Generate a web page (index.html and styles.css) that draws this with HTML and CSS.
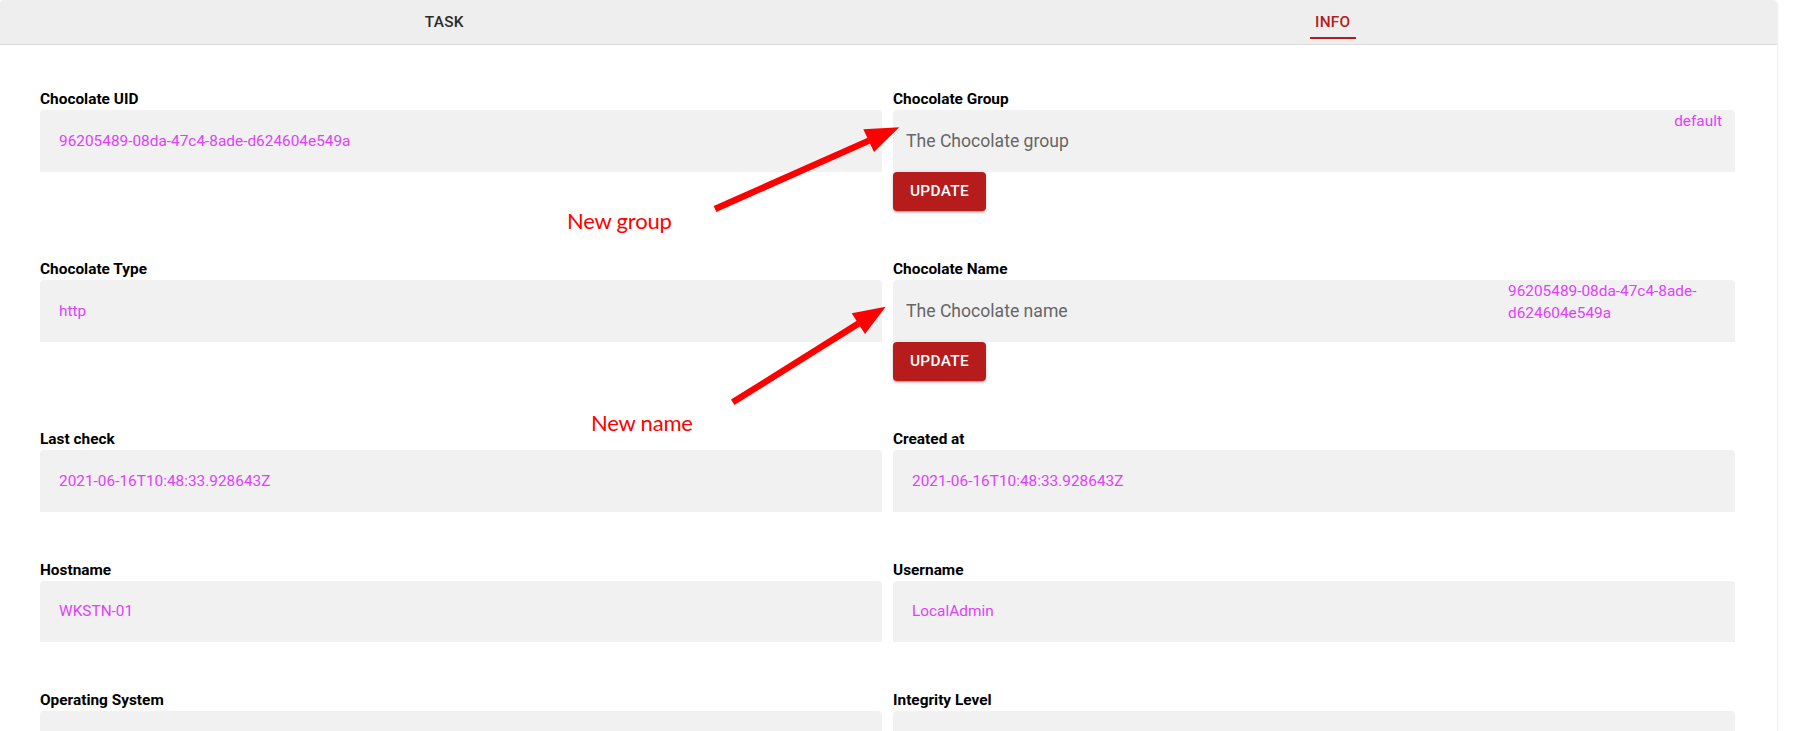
FILE: index.html
```html
<!DOCTYPE html>
<html lang="en">
<head>
<meta charset="utf-8">
<title>Chocolate info</title>
<link rel="stylesheet" href="styles.css">
</head>
<body>
<div class="app">
  <div class="paper">
    <div class="tabs">
      <div class="tab"><span class="tab-label">Task</span></div>
      <div class="tab tab-active"><span class="tab-label">Info</span></div>
    </div>
    <div class="fields">
      <div class="field">
        <div class="field-label">Chocolate UID</div>
        <div class="field-box"><span class="field-value">96205489-08da-47c4-8ade-d624604e549a</span></div>
      </div>
      <div class="field">
        <div class="field-label">Chocolate Group</div>
        <div class="field-box field-input">
          <span class="input-text">The Chocolate group</span>
          <span class="input-adornment">default</span>
        </div>
        <button class="update-btn">Update</button>
      </div>

      <div class="field">
        <div class="field-label">Chocolate Type</div>
        <div class="field-box"><span class="field-value">http</span></div>
      </div>
      <div class="field">
        <div class="field-label">Chocolate Name</div>
        <div class="field-box field-input">
          <span class="input-text">The Chocolate name</span>
          <span class="input-adornment">96205489-08da-47c4-8ade-d624604e549a</span>
        </div>
        <button class="update-btn">Update</button>
      </div>

      <div class="field">
        <div class="field-label">Last check</div>
        <div class="field-box"><span class="field-value">2021-06-16T10:48:33.928643Z</span></div>
      </div>
      <div class="field">
        <div class="field-label">Created at</div>
        <div class="field-box"><span class="field-value">2021-06-16T10:48:33.928643Z</span></div>
      </div>

      <div class="field">
        <div class="field-label">Hostname</div>
        <div class="field-box"><span class="field-value">WKSTN-01</span></div>
      </div>
      <div class="field">
        <div class="field-label">Username</div>
        <div class="field-box"><span class="field-value">LocalAdmin</span></div>
      </div>

      <div class="field">
        <div class="field-label">Operating System</div>
        <div class="field-box"></div>
      </div>
      <div class="field">
        <div class="field-label">Integrity Level</div>
        <div class="field-box"></div>
      </div>
    </div>
  </div>

  <svg class="annotations" width="1803" height="731" viewBox="0 0 1803 731" aria-hidden="true">
    <line class="arrow-shaft" x1="715" y1="209" x2="869" y2="140.6"/>
    <polygon class="arrow-head" points="899.3,127.3 863.3,129.3 874,152"/>
    <line class="arrow-shaft" x1="732.7" y1="402.3" x2="858.5" y2="323.6"/>
    <polygon class="arrow-head" points="885.7,306.7 851.7,313.3 865,334"/>
    <text class="note" x="567" y="229.3">New group</text>
    <text class="note" x="591" y="431">New name</text>
  </svg>
</div>
</body>
</html>
```

FILE: styles.css
```css
html, body {
  margin: 0;
  padding: 0;
  height: 100%;
  overflow: hidden;
  background: #ffffff;
}

body {
  font-family: Roboto, "Liberation Sans", sans-serif;
  color: #000;
}

.app {
  position: relative;
  width: 1803px;
  height: 731px;
  overflow: hidden;
}

.paper {
  width: 1777px;
  min-height: 900px;
  background: #fff;
  border-radius: 4px;
  box-shadow: 0 2px 1px -1px rgba(0,0,0,0.2), 0 1px 1px 0 rgba(0,0,0,0.14), 0 1px 3px 0 rgba(0,0,0,0.12);
}

/* Tabs */
.tabs {
  display: flex;
  height: 44px;
  background: #eeeeee;
  border-bottom: 1px solid #dcdcdc;
  border-radius: 4px 4px 0 0;
}

.tab {
  flex: 1 1 0;
  display: flex;
  justify-content: center;
  align-items: flex-start;
  padding-top: 11px;
  box-sizing: border-box;
}

.tab-label {
  display: block;
  font-size: 15.4px;
  font-weight: 500;
  line-height: 22px;
  letter-spacing: 0.3px;
  text-transform: uppercase;
  color: #2b2b2b;
  padding: 0 5px 4px;
  border-bottom: 2px solid transparent;
}

.tab-active .tab-label {
  color: #b71c1c;
  border-bottom-color: #b71c1c;
}

/* Fields grid */
.fields {
  display: grid;
  grid-template-columns: 1fr 1fr;
  column-gap: 11px;
  row-gap: 47px;
  padding: 43px 42px 0 40px;
}

.field {
  display: flex;
  flex-direction: column;
  align-items: stretch;
}

.field-label {
  font-size: 15.4px;
  font-weight: 700;
  line-height: 22px;
  color: #000;
}

.field-box {
  display: flex;
  align-items: center;
  height: 61.5px;
  box-sizing: border-box;
  padding: 0 13px 0 19px;
  background: #f1f1f1;
  border-radius: 4px 4px 0 0;
}

.field-value {
  font-size: 15.4px;
  line-height: 22px;
  color: #e040fb;
}

.field-input {
  padding-left: 13px;
}

.input-text {
  flex: 1 1 0;
  min-width: 0;
  font-size: 17.6px;
  line-height: 22px;
  color: #666666;
  white-space: nowrap;
}

.input-adornment {
  align-self: flex-start;
  max-width: 214px;
  margin-left: auto;
  font-size: 15.4px;
  line-height: 22px;
  color: #e040fb;
}

.update-btn {
  align-self: flex-start;
  height: 39.5px;
  padding: 0 17px;
  border: none;
  border-radius: 4px;
  background: #b71c1c;
  color: #ffffff;
  font-family: Roboto, "Liberation Sans", sans-serif;
  font-size: 15.4px;
  font-weight: 500;
  letter-spacing: 0.3px;
  text-transform: uppercase;
  box-shadow: 0 3px 1px -2px rgba(0,0,0,0.2), 0 2px 2px 0 rgba(0,0,0,0.14), 0 1px 5px 0 rgba(0,0,0,0.12);
  cursor: pointer;
}

/* Annotation overlay */
.annotations {
  position: absolute;
  top: 0;
  left: 0;
  pointer-events: none;
}

.arrow-shaft {
  stroke: #ff0000;
  stroke-width: 6.5;
  stroke-linecap: butt;
}

.arrow-head {
  fill: #ff0000;
}

.note {
  fill: #ff0000;
  font-family: Lato, "Open Sans", sans-serif;
  font-size: 22px;
  letter-spacing: -0.2px;
}
```
